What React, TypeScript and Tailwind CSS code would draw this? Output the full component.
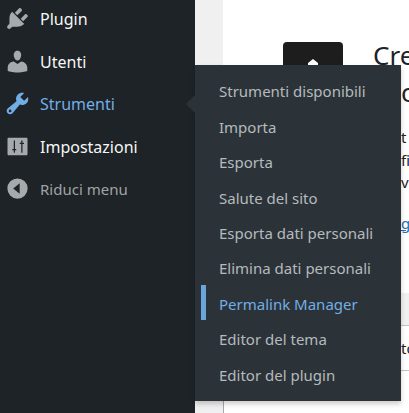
import React from 'react';

const font = "font-['Noto_Sans','Open_Sans',sans-serif]";

const PluginIcon = () => (
  <svg viewBox="0 0 20 20" className="h-[27px] w-[27px] fill-[#a7aaad]">
    <path d="M13.11 4.36L9.87 7.6 8 5.73l3.24-3.24c.35-.34 1.05-.2 1.56.32.52.51.66 1.21.31 1.55zm-8 1.77l.91-1.12 9.01 9.01-1.19.84c-.71.71-2.63 1.16-3.82 1.16H6.14L4.9 17.26c-.59.59-1.54.59-2.12 0-.59-.58-.59-1.53 0-2.12l1.24-1.24v-3.88c0-1.13.4-3.19 1.09-3.89zm7.26 3.97l3.24-3.24c.34-.35 1.04-.21 1.55.31.52.51.66 1.21.31 1.55l-3.24 3.25z" />
  </svg>
);

const UserIcon = () => (
  <svg viewBox="0 0 20 20" className="h-[27px] w-[27px] fill-[#a7aaad]">
    <path d="M10 9.25c-2.27 0-2.73-3.44-2.73-3.44C7 4.02 7.82 2 9.97 2c2.16 0 2.98 2.02 2.71 3.81 0 0-.41 3.44-2.68 3.44zm0 2.57L12.72 10c2.39 0 4.52 2.33 4.52 4.53v2.49s-3.65 1.13-7.24 1.13c-3.65 0-7.24-1.13-7.24-1.13v-2.49c0-2.25 1.94-4.48 4.47-4.48z" />
  </svg>
);

const WrenchIcon = () => (
  <svg viewBox="0 0 20 20" className="h-[27px] w-[27px] fill-[#72aee6]">
    <path d="M16.68 9.77c-1.34 1.34-3.3 1.67-4.95.99l-5.41 6.52c-.99.99-2.59.99-3.58 0s-.99-2.59 0-3.57l6.52-5.42c-.68-1.65-.35-3.61.99-4.95 1.28-1.28 3.12-1.62 4.72-1.06l-2.89 2.89 2.82 2.82 2.86-2.87c.53 1.58.18 3.39-1.08 4.65zM3.81 16.21c.4.39 1.04.39 1.43 0 .4-.4.4-1.04 0-1.43-.39-.4-1.03-.4-1.43 0-.39.39-.39 1.03 0 1.43z" />
  </svg>
);

const SettingsIcon = () => (
  <svg viewBox="0 0 20 20" className="mx-[1px] h-[25px] w-[25px] fill-[#a7aaad]">
    <path d="M18 16V4c0-.55-.45-1-1-1H3c-.55 0-1 .45-1 1v12c0 .55.45 1 1 1h14c.55 0 1-.45 1-1zM8 12h1v1H8v1.5c0 .28-.22.5-.5.5s-.5-.22-.5-.5V13H5.8v-1H7V5.5c0-.28.22-.5.5-.5s.5.22.5.5V12zm5-4h-1.200V7H13V5.500c0-.28.22-.5.5-.5s.5.22.5.5V7h1.200v1H14v6.500c0 .28-.22.5-.5.5s-.5-.22-.5-.5V8z" />
  </svg>
);

const CollapseIcon = () => (
  <svg viewBox="0 0 20 20" className="h-[27px] w-[27px] fill-[#a7aaad]">
    <path d="M10 2.500a7.500 7.500 0 1 0 0 15 7.500 7.500 0 0 0 0-15zm1.600 3.700v7.600L6.800 10z" fillRule="evenodd" />
  </svg>
);

const menu = [
  { label: 'Plugin', icon: <PluginIcon />, text: 'text-[16px] text-[#f6f7f7]' },
  { label: 'Utenti', icon: <UserIcon />, text: 'text-[16px] text-[#f6f7f7]' },
  { label: 'Strumenti', icon: <WrenchIcon />, text: 'text-[16px] text-[#72aee6]' },
  { label: 'Impostazioni', icon: <SettingsIcon />, text: 'text-[16px] text-[#f6f7f7]' },
  { label: 'Riduci menu', icon: <CollapseIcon />, text: 'text-[15px] text-[#a0a3a6]' },
];

const submenu = [
  'Strumenti disponibili',
  'Importa',
  'Esporta',
  'Salute del sito',
  'Esporta dati personali',
  'Elimina dati personali',
  'Permalink Manager',
  'Editor del tema',
  'Editor del plugin',
];

export default function App() {
  return (
    <div className={`relative flex h-[413px] w-[409px] overflow-hidden ${font}`}>
      <aside className="w-[195px] shrink-0 bg-[#1d2327]">
        <ul className="-mt-[2px] flex flex-col">
          {menu.map((item) => (
            <li key={item.label} className="flex h-[42.5px] items-center gap-[9px] pl-[4px]">
              <span className="-mt-[1px] flex">{item.icon}</span>
              <span className={item.text}>{item.label}</span>
            </li>
          ))}
        </ul>
      </aside>

      <div className="w-[28px] shrink-0 bg-[#f0f0f1]" />

      <main className="flex min-w-0 flex-1 flex-col bg-white">
        <div className="flex h-[293px] gap-[30px] pl-[60px] pt-[42px]">
          <div className="flex h-[60px] w-[60px] shrink-0 justify-center rounded-[4px] bg-[#1d1d1d] pt-[17px]">
            <svg viewBox="0 0 12 12" className="h-[12px] w-[12px] fill-white">
              <path d="M6 0l5 4v8H1V4z" />
            </svg>
          </div>
          <div className="-mt-[6px] whitespace-nowrap">
            <h2 className="text-[26px] leading-[38px] text-[#1d2327]">Cre</h2>
            <div className="pl-[28px]">
              <p className="-mt-[1px] text-[26px] leading-[38px] text-[#1d2327]">o</p>
              <div className="mt-[15px] text-[15px] leading-[22.5px] text-[#1d2327]">
                <p>t</p>
                <p>fi</p>
                <p>v</p>
              </div>
              <a className="mt-[18px] block text-[15px] leading-[22.5px] text-[#2271b1] underline">gi</a>
            </div>
          </div>
        </div>
        <div className="flex flex-1 flex-col border-l border-[#a7aaad]">
          <div className="h-[33px] border-b border-[#c3c4c7] bg-[#f0f0f1]" />
          <div className="flex h-[45px] items-center border-b border-[#c3c4c7] pl-[177px]">
            <span className="text-[15px] text-[#1d2327]">to</span>
          </div>
        </div>
      </main>

      <div className="absolute left-[195px] top-[65px] h-[336px] w-[206px] bg-[#2c3338] py-[9px] shadow-[0_3px_5px_rgba(0,0,0,0.2)]">
        <div className="absolute -left-[9px] top-[30px] h-0 w-0 border-y-[9px] border-r-[9px] border-y-transparent border-r-[#2c3338]" />
        <ul className="flex flex-col">
          {submenu.map((label) => (
            <li
              key={label}
              className={`relative flex h-[35.4px] items-center whitespace-nowrap pl-[24px] text-[15px] ${
                label === 'Permalink Manager' ? 'text-[#72aee6]' : 'text-[#b5babe]'
              }`}
            >
              {label === 'Permalink Manager' && <span className="absolute left-[6px] -top-[1px] h-[35px] w-[5px] bg-[#6aa5de]" />}
              {label}
            </li>
          ))}
        </ul>
      </div>
    </div>
  );
}
